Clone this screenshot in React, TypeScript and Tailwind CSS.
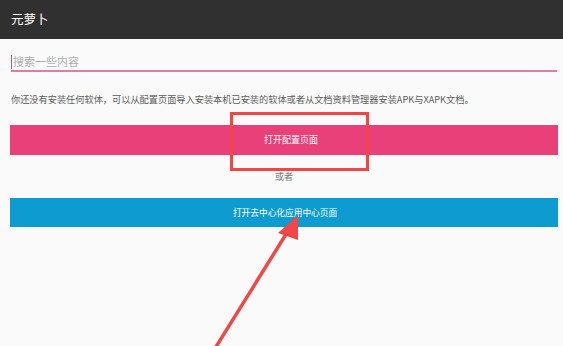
export default function App() {
  const font = { fontFamily: '"Noto Sans CJK SC", "Noto Sans", sans-serif' };
  return (
    <div className="relative w-[563px] h-[346px] overflow-hidden bg-[#fafafa]" style={font}>
      <div className="h-[39px] bg-[#303030] flex items-center px-[11px]">
        <span className="text-white text-[12.5px] leading-none">元萝卜</span>
      </div>

      <div className="pl-[10px] pr-[5px]">
        <div className="mt-[14px] h-[19px] flex items-center border-b-2 border-[#dd7fa2] ml-[1px] mr-[1px]">
          <span className="w-px h-[14px] bg-[#c8507a]" />
          <span className="text-[11px] leading-none text-[#b0b0b0] ml-[1px]">搜索一些内容</span>
        </div>

        <p className="mt-[23px] text-[9.2px] leading-none text-[#5c5c5c] pl-[1px] whitespace-nowrap">
          你还没有安装任何软体，可以从配置页面导入安装本机已安装的软体或者从文档资料管理器安装APK与XAPK文档。
        </p>

        <button className="mt-[21px] w-full h-[30px] bg-[#ea4079] text-white text-[9px] flex items-center justify-center pl-[14px]">
          打开配置页面
        </button>

        <div className="h-[43px] flex items-center justify-center text-[9px] text-[#777]">或者</div>

        <button className="w-full h-[29px] bg-[#0e9bcf] text-white text-[8.7px] flex items-center justify-center pl-[2px]">
          打开去中心化应用中心页面
        </button>
      </div>

      {/* annotation: red box */}
      <div className="absolute left-[230px] top-[112px] w-[139px] h-[59px] border-[3px] border-[#f04646]" />

      {/* annotation: arrow */}
      <svg className="absolute inset-0" width="563" height="346" viewBox="0 0 563 346">
        <line x1="214" y1="350" x2="288" y2="231" stroke="#f04848" strokeWidth="3.5" />
        <polygon points="298,215 278,233 298,240" fill="#f04848" />
      </svg>
    </div>
  );
}
